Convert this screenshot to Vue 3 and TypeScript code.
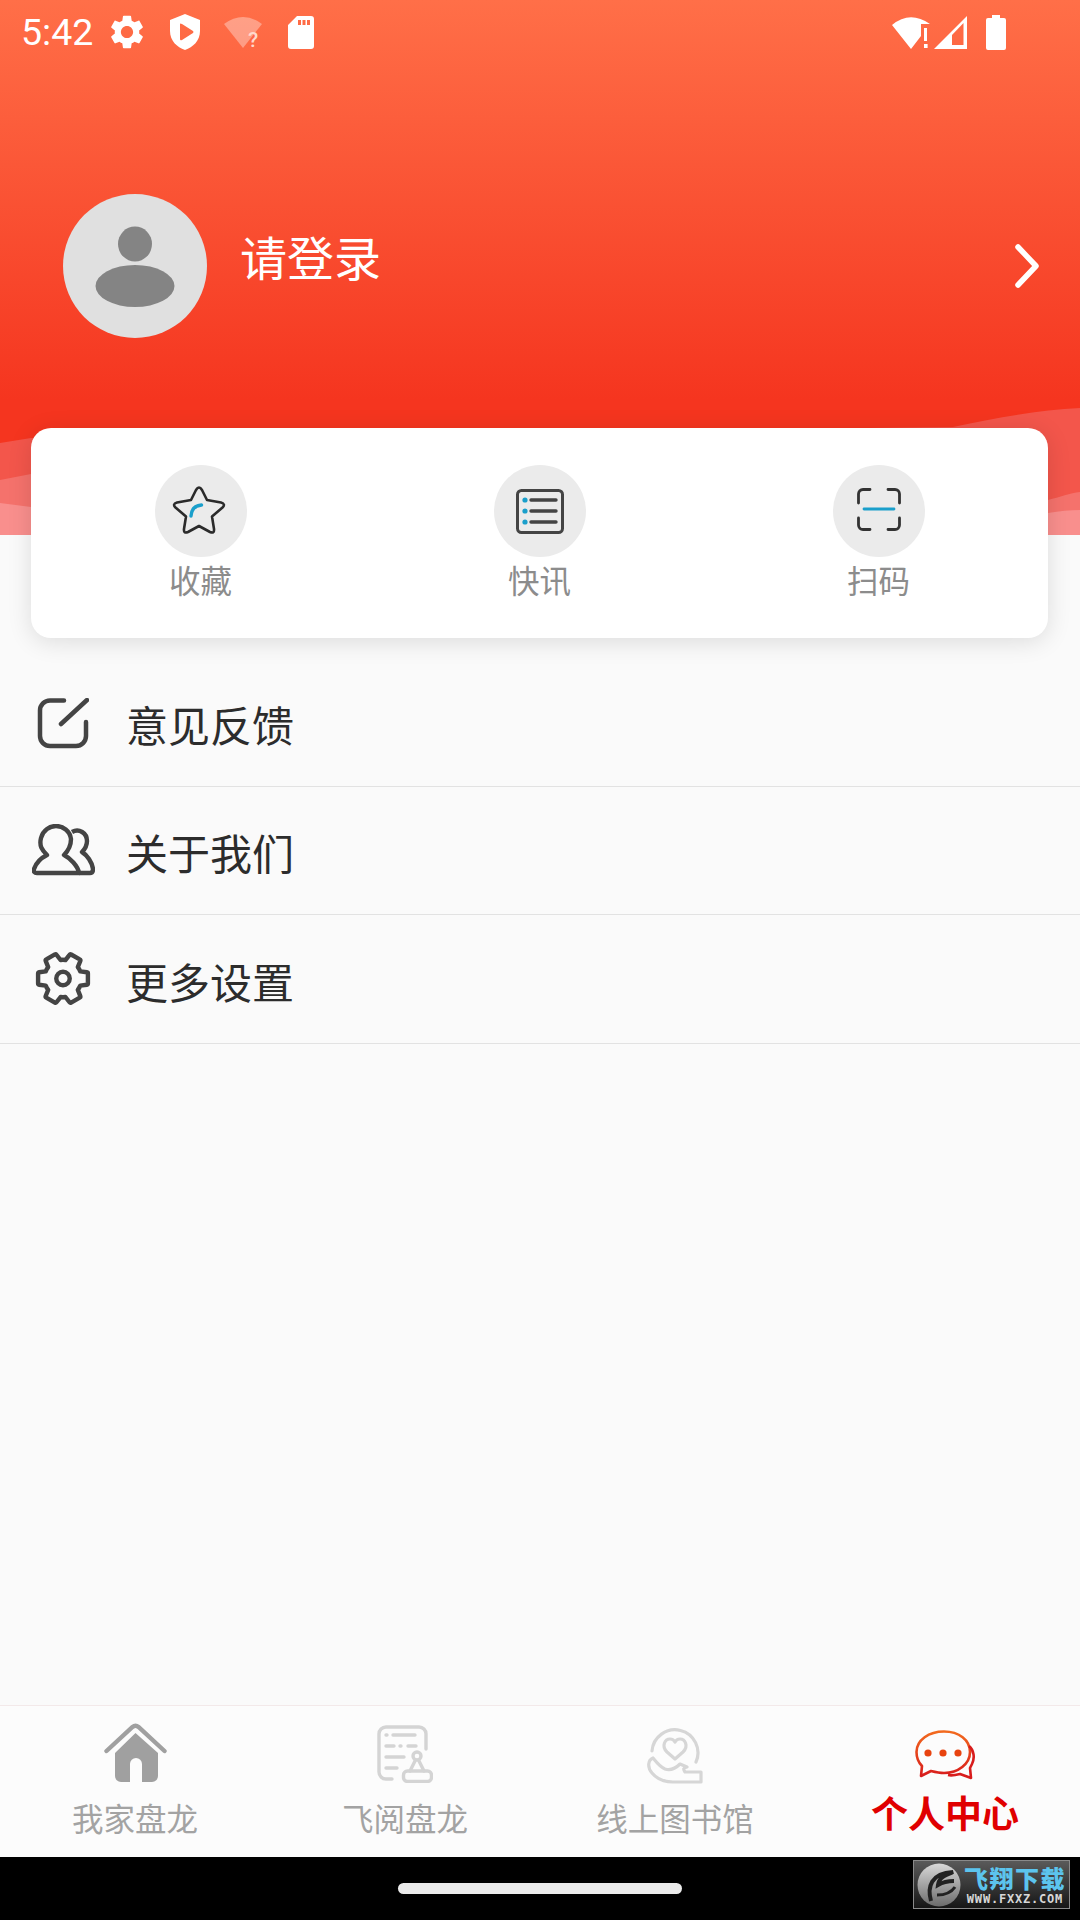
<template>
  <div class="page">
    <header class="hero">
      <svg class="waves" viewBox="0 0 1080 135" preserveAspectRatio="none">
        <path d="M0 43 L31 38 L953 27 C1000 17 1040 10 1080 8 V135 H0 Z" fill="#f3564b" />
        <path d="M0 80 L31 74 L1048 100 C1060 97 1070 93 1080 92 V135 H0 Z" fill="#f5726c" />
        <path d="M0 103 L31 107 L1048 113 C1060 111 1070 110 1080 110 V135 H0 Z" fill="#f98f8d" />
      </svg>

      <div class="status-bar">
        <span class="clock">5:42</span>
        <svg class="st-gear" viewBox="2.6 2 18.8 20"><path fill="#fff" d="M19.14 12.94c.04-.3.06-.61.06-.94 0-.32-.02-.64-.07-.94l2.03-1.58c.18-.14.23-.41.12-.61l-1.92-3.32c-.12-.22-.37-.29-.59-.22l-2.39.96c-.5-.38-1.03-.7-1.62-.94l-.36-2.54c-.04-.24-.24-.41-.48-.41h-3.84c-.24 0-.43.17-.47.41l-.36 2.54c-.59.24-1.13.57-1.62.94l-2.39-.96c-.22-.08-.47 0-.59.22L2.74 8.87c-.12.21-.08.47.12.61l2.03 1.58c-.05.3-.09.63-.09.94s.02.64.07.94l-2.03 1.58c-.18.14-.23.41-.12.61l1.92 3.32c.12.22.37.29.59.22l2.39-.96c.5.38 1.03.7 1.62.94l.36 2.54c.05.24.24.41.48.41h3.84c.24 0 .44-.17.47-.41l.36-2.54c.59-.24 1.13-.56 1.62-.94l2.39.96c.22.08.47 0 .59-.22l1.92-3.32c.12-.22.07-.47-.12-.61l-2.01-1.58zM12 15.6c-1.98 0-3.6-1.62-3.6-3.6s1.62-3.6 3.6-3.6 3.6 1.62 3.6 3.6-1.62 3.6-3.6 3.6z" /></svg>
        <svg class="st-shield" viewBox="0 0 30 36"><path fill="#fff" fill-rule="evenodd" d="M15 0 L30 6 V17 C30 27 23 33 15 36 C7 33 0 27 0 17 V6 Z M10 10 L10 25 Q10 27 12 26 L23 19 Q24 18 23 17 L12 10 Q10 9 10 10 Z" /></svg>
        <svg class="st-wifi-q" viewBox="0 0 38 31">
          <path fill="#fff" opacity=".35" d="M0 7 Q19 -7 38 7 L19 31 Z" />
          <text x="24" y="30" class="st-q">?</text>
        </svg>
        <svg class="st-sd" viewBox="0 0 26 33"><path fill="#fff" fill-rule="evenodd" d="M9 0 H23 a3 3 0 0 1 3 3 V30 a3 3 0 0 1 -3 3 H3 a3 3 0 0 1 -3 -3 V9 Z M10 4 V9 H13 V4 Z M14.5 4 V9 H17.5 V4 Z M19 4 V9 H22 V4 Z" /></svg>
        <div class="st-right">
          <svg class="st-wifi" viewBox="0 0 38 33">
            <path fill="#fff" d="M0 9 Q18 -6 38 8 H29 V20 L19 33 Z" />
            <rect x="32" y="12" width="3" height="13" fill="#fff" />
            <rect x="32" y="28" width="3.6" height="4" fill="#fff" />
          </svg>
          <svg class="st-signal" viewBox="0 0 33 33"><path fill="#fff" fill-rule="evenodd" d="M0 33 L33 0 V33 Z M18 29 H29.5 V7 L18 19 Z" /></svg>
          <svg class="st-battery" viewBox="0 0 20 35"><path fill="#fff" d="M6 0 H14 V3 H18 a2 2 0 0 1 2 2 V33 a2 2 0 0 1 -2 2 H2 a2 2 0 0 1 -2 -2 V5 a2 2 0 0 1 2 -2 H6 Z" /></svg>
        </div>
      </div>

      <div class="profile">
        <svg class="avatar" viewBox="0 0 144 144">
          <circle cx="72" cy="72" r="72" fill="#e0e0e0" />
          <ellipse cx="72" cy="50" rx="17" ry="17.5" fill="#848484" />
          <ellipse cx="72" cy="92" rx="39.5" ry="21" fill="#848484" />
        </svg>
        <span class="login">请登录</span>
        <svg class="chevron" viewBox="0 0 26 44"><path d="M4 3 L22 22 L4 41" fill="none" stroke="#fff" stroke-width="5.5" stroke-linecap="round" stroke-linejoin="round" /></svg>
      </div>
    </header>

    <section class="card">
      <div class="shortcut">
        <div class="disc">
          <svg class="ic-star" viewBox="0 0 54 50">
            <path d="M24 5 Q27 0 30 5 L35 15 L49 17.5 Q54 19 50.5 22.5 L40 31.5 L42 44 Q42.5 49 38 47 L27 41 L16 47 Q11.5 49 12 44 L14 31.5 L3.5 22.5 Q0 19 5 17.5 L19 15 Z" fill="none" stroke="#2b2b2b" stroke-width="2.6" stroke-linejoin="round" />
            <path d="M19 31 Q19.5 21 29.5 20" fill="none" stroke="#1a9fcb" stroke-width="3.4" stroke-linecap="round" />
          </svg>
        </div>
        <span>收藏</span>
      </div>
      <div class="shortcut">
        <div class="disc">
          <svg class="ic-list" viewBox="0 0 48 45">
            <rect x="1.5" y="1.5" width="45" height="42" rx="4" fill="none" stroke="#444" stroke-width="3" />
            <g fill="#1a9fcb"><circle cx="9" cy="11" r="2.6" /><circle cx="9" cy="22" r="2.6" /><circle cx="9" cy="33" r="2.6" /></g>
            <path d="M15 11 H40 M15 22 H40 M15 33 H40" stroke="#444" stroke-width="3.4" stroke-linecap="round" />
          </svg>
        </div>
        <span>快讯</span>
      </div>
      <div class="shortcut">
        <div class="disc">
          <svg class="ic-scan" viewBox="0 0 44 43">
            <path d="M13 1.5 H6 a4.5 4.5 0 0 0 -4.5 4.5 V15 M31 1.5 H38 a4.5 4.5 0 0 1 4.5 4.5 V15 M13 41.5 H6 a4.5 4.5 0 0 1 -4.5 -4.5 V30 M31 41.5 H38 a4.5 4.5 0 0 0 4.5 -4.5 V30" fill="none" stroke="#333" stroke-width="2.8" stroke-linecap="round" />
            <path d="M7 21 H37" stroke="#1a9fcb" stroke-width="2.8" stroke-linecap="round" />
          </svg>
        </div>
        <span>扫码</span>
      </div>
    </section>

    <main class="menu">
      <div class="menu-row">
        <div class="menu-icon">
          <svg class="ic-edit" viewBox="0 0 52 51">
            <path d="M27 2.5 H13 a10 10 0 0 0 -10 10 V38 a10 10 0 0 0 10 10 H39 a10 10 0 0 0 10 -10 V24" fill="none" stroke="#444" stroke-width="4.5" stroke-linecap="round" />
            <path d="M24 26 L50 2" stroke="#444" stroke-width="4.5" stroke-linecap="round" />
          </svg>
        </div>
        <span class="menu-text">意见反馈</span>
      </div>
      <div class="menu-row">
        <div class="menu-icon">
          <svg class="ic-people" viewBox="0 0 63 52">
            <path d="M15 31 C10 26 7 22 9 14 C11 6 18 2 24 2 C31 2 38 7 39 15 C39 22 36 27 32 31 C38 34 46 42 47 49 H5 Q1 49 2 45 C4 39 9 34 15 31 Z" fill="none" stroke="#444" stroke-width="4.4" stroke-linejoin="round" />
            <path d="M40 8 C47 4 55 9 55 17 C55 22 52 26 50 28 C55 31 60 38 61 45 Q61 49 58 49 H47" fill="none" stroke="#444" stroke-width="4.4" stroke-linejoin="round" />
          </svg>
        </div>
        <span class="menu-text">关于我们</span>
      </div>
      <div class="menu-row">
        <div class="menu-icon">
          <svg class="ic-gear" viewBox=".9 1.4 22.2 21.2">
            <path transform="rotate(90 12 12)" fill="none" stroke="#444" stroke-width="1.7" stroke-linejoin="round" d="M19.14 12.94c.04-.3.06-.61.06-.94 0-.32-.02-.64-.07-.94l2.03-1.58c.18-.14.23-.41.12-.61l-1.92-3.32c-.12-.22-.37-.29-.59-.22l-2.39.96c-.5-.38-1.03-.7-1.62-.94l-.36-2.54c-.04-.24-.24-.41-.48-.41h-3.84c-.24 0-.43.17-.47.41l-.36 2.54c-.59.24-1.13.57-1.62.94l-2.39-.96c-.22-.08-.47 0-.59.22L2.74 8.87c-.12.21-.08.47.12.61l2.03 1.58c-.05.3-.09.63-.09.94s.02.64.07.94l-2.03 1.58c-.18.14-.23.41-.12.61l1.92 3.32c.12.22.37.29.59.22l2.39-.96c.5.38 1.03.7 1.62.94l.36 2.54c.05.24.24.41.48.41h3.84c.24 0 .44-.17.47-.41l.36-2.54c.59-.24 1.13-.56 1.62-.94l2.39.96c.22.08.47 0 .59-.22l1.92-3.32c.12-.22.07-.47-.12-.61l-2.01-1.58z" />
            <circle cx="12" cy="12" r="2.6" fill="none" stroke="#444" stroke-width="1.7" />
          </svg>
        </div>
        <span class="menu-text">更多设置</span>
      </div>
    </main>

    <nav class="tabs">
      <div class="tab">
        <div class="tab-icon">
          <svg class="ic-home" viewBox="0 0 63 59">
            <path d="M2.5 28 L28.5 4 Q31.5 1.5 34.5 4 L60.5 28" fill="none" stroke="#a0a0a0" stroke-width="4.4" stroke-linecap="round" />
            <path fill="#a0a0a0" d="M31.5 10 L54 30 V53 a6 6 0 0 1 -6 6 H38 V41 a6 6 0 0 0 -12 0 V59 H17 a6 6 0 0 1 -6 -6 V30 Z" />
          </svg>
        </div>
        <span class="tab-label">我家盘龙</span>
      </div>
      <div class="tab">
        <div class="tab-icon">
          <svg class="ic-doc" viewBox="0 0 56 58">
            <g fill="none" stroke="#d4d4d4" stroke-width="3.4" stroke-linecap="round" stroke-linejoin="round">
              <path d="M49 24 V9 a7 7 0 0 0 -7 -7 H9 a7 7 0 0 0 -7 7 V47 a7 7 0 0 0 7 7 H15" />
              <circle cx="40" cy="31" r="4" />
              <path d="M38 36 L33 46 M42 36 L47 46" />
              <rect x="26.5" y="46" width="28" height="10.5" rx="4" />
            </g>
            <path d="M9 10 H10 M16 10 H38 M9 21 H17 M23 21 H24 M31 21 H39 M9 32 H27 M9 43 H20" stroke="#d4d4d4" stroke-width="3.4" stroke-linecap="round" />
          </svg>
        </div>
        <span class="tab-label">飞阅盘龙</span>
      </div>
      <div class="tab">
        <div class="tab-icon">
          <svg class="ic-lib" viewBox="0 0 56 57">
            <g fill="none" stroke="#d6d6d6" stroke-width="3.2" stroke-linecap="round" stroke-linejoin="round">
              <path d="M5 24 A23 23 0 1 1 49 35" />
              <path d="M28 32 L20 25 C14 19 18 12 23 12 C25 12 27 13 28 15 C29 13 31 12 33 12 C38 12 42 19 36 25 Z" />
              <path d="M6 31 C1 33 0 40 5 46 C10 52 18 55 26 55 H54 V45 H38 C36 42 36 41 40 40 L33 37 C29 41 24 44 18 42 C13 40 10 36 6 31 Z" />
            </g>
          </svg>
        </div>
        <span class="tab-label">线上图书馆</span>
      </div>
      <div class="tab tab-active">
        <div class="tab-icon">
          <svg class="ic-chat" viewBox="0 0 60 50">
            <defs>
              <linearGradient id="chatGrad" x1="0" y1="0" x2="0" y2="1">
                <stop offset="0" stop-color="#f26a1e" />
                <stop offset="1" stop-color="#d81c1c" />
              </linearGradient>
            </defs>
            <path d="M29 1.5 C44 1.5 55 10 55 22 C55 34 43 43 29 43 C24 43 20 42 16 41 L6 46 L7 36 C3 32 1.5 27 1.5 22 C1.5 10 14 1.5 29 1.5 Z" fill="none" stroke="url(#chatGrad)" stroke-width="2.6" stroke-linejoin="round" />
            <path d="M54 16 C59 20 60 28 57 34 L55 38 L56 48 L45 44 C41 45 37 46 33 45" fill="none" stroke="#d81c1c" stroke-width="2.6" stroke-linejoin="round" />
            <g fill="#e8430f"><circle cx="13" cy="23" r="3.6" /><circle cx="28" cy="23" r="3.6" /><circle cx="43" cy="23" r="3.6" /></g>
          </svg>
        </div>
        <span class="tab-label">个人中心</span>
      </div>
    </nav>

    <div class="nav-bar"><div class="pill"></div></div>

    <div class="watermark">
      <svg class="wm-logo" viewBox="0 0 44 44">
        <defs>
          <linearGradient id="wmGrad" x1="0" y1="0" x2="0" y2="1">
            <stop offset="0" stop-color="#d8d8d8" />
            <stop offset="1" stop-color="#6c6c6c" />
          </linearGradient>
        </defs>
        <circle cx="22" cy="22" r="21.5" fill="url(#wmGrad)" />
        <path d="M14 38 C10 24 14 10 36 9 C28 13 22 14 21 22 C26 19 32 18 37 18" fill="none" stroke="#222" stroke-width="4" />
        <path d="M20 32 C26 32 34 30 38 24" fill="none" stroke="#222" stroke-width="3" />
      </svg>
      <div class="wm-text">
        <span class="wm-cn">飞翔下载</span>
        <span class="wm-url">WWW.FXXZ.COM</span>
      </div>
    </div>
  </div>
</template>

<script setup lang="ts">
// static profile screen, nothing to wire up
</script>

<style>
html,
body {
  margin: 0;
  background: #fafafa;
}
</style>

<style scoped>
.page {
  position: relative;
  width: 1080px;
  height: 1920px;
  display: flex;
  flex-direction: column;
  background: #fafafa;
  font-family: "Noto Sans CJK SC", "Noto Sans", sans-serif;
  overflow: hidden;
}

.hero {
  position: relative;
  height: 535px;
  flex-shrink: 0;
  background: linear-gradient(180deg, #ff6f48 0%, #f5351f 400px);
}

.waves {
  position: absolute;
  left: 0;
  bottom: 0;
  width: 1080px;
  height: 135px;
}

.status-bar {
  position: relative;
  height: 64px;
  display: flex;
  align-items: center;
  padding: 0 74px 0 21px;
}

.clock {
  font-family: Roboto, sans-serif;
  font-size: 37.5px;
  line-height: 64px;
  color: #fff;
  width: 71px;
}

.st-gear {
  width: 32px;
  height: 34px;
  margin-left: 19px;
}

.st-shield {
  width: 30px;
  height: 36px;
  margin-left: 27px;
}

.st-wifi-q {
  width: 38px;
  height: 31px;
  margin-left: 24px;
  overflow: visible;
}

.st-q {
  font-family: Roboto, sans-serif;
  font-size: 21px;
  font-weight: 500;
  fill: #ffd9cc;
}

.st-sd {
  width: 26px;
  height: 33px;
  margin-left: 26px;
}

.st-right {
  margin-left: auto;
  display: flex;
  align-items: center;
}

.st-wifi {
  width: 38px;
  height: 33px;
}

.st-signal {
  width: 33px;
  height: 33px;
  margin-left: 4px;
}

.st-battery {
  width: 20px;
  height: 35px;
  margin-left: 19px;
}

.profile {
  position: relative;
  display: flex;
  align-items: center;
  margin-top: 130px;
  padding: 0 40px 0 63px;
}

.avatar {
  width: 144px;
  height: 144px;
}

.login {
  margin-left: 33px;
  margin-bottom: 20px;
  font-size: 47px;
  line-height: 60px;
  color: #fff;
}

.chevron {
  width: 26px;
  height: 44px;
  margin-left: auto;
}

.card {
  position: relative;
  margin: -107px 32px 0 31px;
  height: 210px;
  display: grid;
  grid-template-columns: repeat(3, 1fr);
  padding-top: 37px;
  box-sizing: border-box;
  background: #fff;
  border-radius: 20px;
  box-shadow: 0 4px 24px rgba(0, 0, 0, 0.12);
}

.shortcut {
  display: flex;
  flex-direction: column;
  align-items: center;
  font-size: 31.5px;
  line-height: 44px;
  color: #8c8c8c;
}

.disc {
  width: 92px;
  height: 92px;
  border-radius: 50%;
  background: #ebebeb;
  display: flex;
  align-items: center;
  justify-content: center;
}

.ic-star {
  width: 54px;
  height: 50px;
  margin-top: -2px;
  margin-left: -3px;
}

.ic-list {
  width: 48px;
  height: 45px;
}

.ic-scan {
  width: 44px;
  height: 43px;
  margin-top: -3px;
}

.menu {
  flex: 1;
  padding-top: 20px;
}

.menu-row {
  height: 128.5px;
  box-sizing: border-box;
  display: flex;
  align-items: center;
  border-bottom: 1.5px solid #e2e2e2;
  font-size: 42px;
  color: #2c2c2c;
}

.menu-text {
  margin-top: 3px;
}

.menu-icon {
  width: 126px;
  flex-shrink: 0;
  display: flex;
  justify-content: center;
  box-sizing: border-box;
}

.ic-edit {
  width: 52px;
  height: 51px;
  margin-top: 3px;
}

.ic-people {
  width: 63px;
  height: 52px;
  margin-top: -1px;
}

.ic-gear {
  width: 58px;
  height: 55px;
  margin-top: -1px;
}

.tabs {
  height: 152px;
  flex-shrink: 0;
  box-sizing: border-box;
  display: grid;
  grid-template-columns: repeat(4, 1fr);
  padding-top: 16px;
  background: #fcfcfc;
  border-top: 1px solid #f3e9e9;
}

.tab {
  display: flex;
  flex-direction: column;
  align-items: center;
}

.tab-icon {
  height: 60px;
  display: flex;
  align-items: center;
  justify-content: center;
}

.tab-label {
  margin-top: 15px;
  font-size: 31.5px;
  line-height: 40px;
  color: #a3a3a3;
}

.tab-active .tab-label {
  margin-top: 10px;
  font-size: 37px;
  line-height: 40px;
  font-weight: 700;
  color: #e00000;
}

.ic-home {
  width: 63px;
  height: 59px;
}

.ic-doc {
  width: 56px;
  height: 58px;
  margin-top: 4px;
}

.ic-lib {
  width: 56px;
  height: 57px;
  margin-top: 6px;
}

.ic-chat {
  width: 60px;
  height: 50px;
  margin-top: 6px;
}

.nav-bar {
  height: 63px;
  flex-shrink: 0;
  background: #000;
  display: flex;
  justify-content: center;
  padding-top: 26px;
  box-sizing: border-box;
}

.pill {
  width: 284px;
  height: 11px;
  border-radius: 6px;
  background: #ebebeb;
}

.watermark {
  position: absolute;
  left: 913px;
  top: 1860px;
  width: 157px;
  height: 49px;
  box-sizing: border-box;
  display: flex;
  align-items: center;
  padding-left: 3px;
  border: 1px solid #8a8a8a;
  background: linear-gradient(180deg, #5a5a5a 0%, #161616 100%);
}

.wm-logo {
  width: 44px;
  height: 44px;
  flex-shrink: 0;
}

.wm-text {
  margin-left: 2px;
  display: flex;
  flex-direction: column;
  align-items: center;
  width: 104px;
}

.wm-cn {
  font-size: 24px;
  line-height: 29px;
  font-weight: 900;
  letter-spacing: 1.5px;
  color: #5cc4ee;
}

.wm-url {
  font-family: "DejaVu Sans Mono", monospace;
  font-size: 12px;
  line-height: 15px;
  font-weight: 700;
  letter-spacing: 0.8px;
  color: #d8d8d8;
}
</style>
